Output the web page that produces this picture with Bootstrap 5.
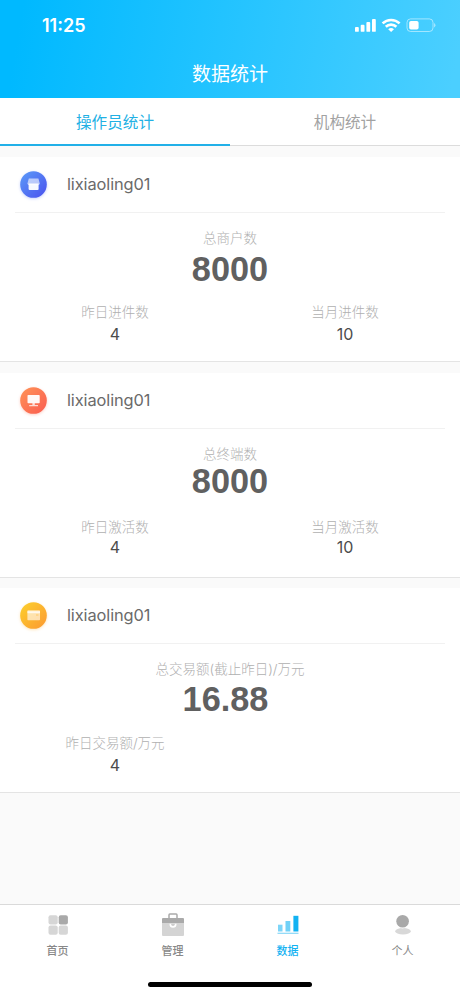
<!DOCTYPE html>
<html lang="zh-CN">
<head>
<meta charset="utf-8">
<meta name="viewport" content="width=device-width, initial-scale=1">
<title>数据统计</title>
<link href="https://cdn.jsdelivr.net/npm/bootstrap@5.3.0/dist/css/bootstrap.min.css" rel="stylesheet">
<style>
body{font-family:Inter,"Noto Sans CJK SC",sans-serif;background:#fafafa;color:#555;height:996px;overflow:hidden}
.app-head{height:98px;background:linear-gradient(100deg,#00b9ff 5%,#4bcfff 98%)}
.status{height:50px;padding:2px 24px 0 42px}
.clock{font-size:18px;font-weight:600;line-height:1}
.page-title{font-size:19px;line-height:50px;font-weight:400}
.tabs{height:48px}
.tabs .nav-link{border-radius:0;padding:0;font-size:15.6px;line-height:50px;height:48px;color:#a2a2a2;border-bottom:1px solid #dcdcdc}
.tabs .nav-link.active{color:#22b0e4;background:none;border-bottom:2px solid #22b0e8}
.stats{padding-top:11px;gap:10.5px}
.stat{height:205px;border-bottom:1px solid #e4e4e4}
.stat-head{height:56px;margin:0 15px;padding-left:5px;gap:20px;border-bottom:1px solid #f1f1f1}
.stat-head svg{width:27px;height:27px;overflow:visible}
.tone-blue{filter:drop-shadow(0 1px 1.5px #5b78f855)}
.tone-red{filter:drop-shadow(0 1px 1.5px #fa705055)}
.tone-gold{filter:drop-shadow(0 1px 1.5px #fcb03255)}
.user{font-size:16.4px;line-height:1;letter-spacing:-.1px;color:#6a6a6a}
.caption{font-size:13.5px;line-height:20px;color:#b0b0b0;font-weight:300}
.total{font:bold 34.3px/36px "Liberation Sans",Arial,sans-serif;color:#606060;margin-top:3px}
.value{font-size:16px;line-height:20px;color:#4c4c4c}
.main-block{padding-top:15px}
.sub-block{margin-top:15px}
.sub-block .value{margin-top:2px}
.tight .total{margin-top:-1px}
.tight .sub-block{margin-top:18.5px}
.tight .sub-block .value{margin-top:0}
.money .total{margin-top:2px;padding-right:9px}
.money .sub-block{margin-top:16px}
.tabbar{height:92px;border-top:1px solid #dadada}
.tabbar a{color:#888;font-size:11px;line-height:16px;font-weight:500;padding-top:8px}
.tabbar a.current{color:#12b2f2}
.tabbar svg{width:24px;height:24px;margin-bottom:6px}
.home-line{width:164px;height:5.5px;margin-bottom:9px}
</style>
</head>
<body class="d-flex flex-column">
<header class="app-head text-white flex-shrink-0">
  <div class="status d-flex justify-content-between align-items-center">
    <span class="clock">11:25</span>
    <svg width="81" height="16" viewBox="0 0 81 16" fill="#fff" overflow="visible">
      <rect x="0" y="9" width="3.8" height="4.8" rx=".9"/><rect x="5.7" y="6.8" width="3.8" height="7" rx=".9"/><rect x="11.4" y="4" width="3.8" height="9.8" rx=".9"/><rect x="17" y="1" width="3.8" height="12.8" rx=".9"/>
      <g transform="translate(-1 -1)"><g fill="none" stroke="#fff" stroke-width="2.6"><path d="M28.6 6.4a12.2 12.2 0 0 1 17 0"/><path d="M31.8 9.8a7.6 7.6 0 0 1 10.6 0"/></g><path d="M34.2 12.2a4.3 4.3 0 0 1 5.8 0l-2.9 2.8z"/></g>
      <g transform="translate(-.8 -1)"><rect x="52.8" y="1.9" width="26" height="12.6" rx="3.6" fill="none" stroke="#fff" stroke-opacity=".5"/><rect x="55" y="4" width="9.4" height="8.6" rx="1.8"/><path d="M80 6v4.4q1.2-.8 1.2-2.2T80 6z" opacity=".6"/></g>
    </svg>
  </div>
  <h1 class="page-title text-center m-0">数据统计</h1>
</header>
<nav class="tabs nav nav-pills nav-justified bg-white flex-shrink-0">
  <a class="nav-link active" href="#">操作员统计</a>
  <a class="nav-link" href="#">机构统计</a>
</nav>
<main class="stats d-flex flex-column flex-grow-1">
  <section class="stat bg-white">
    <div class="stat-head d-flex align-items-center">
      <svg class="tone-blue" viewBox="0 0 27 27"><defs><linearGradient id="blue" x2="1" y2="1"><stop stop-color="#5b9cf8"/><stop offset="1" stop-color="#4a50ee"/></linearGradient></defs><circle cx="13.5" cy="13.5" r="13.3" fill="url(#blue)"/><path d="M8.8 7.6h9.6l1.3 4.6q0 2-1.8 2H9.3q-1.8 0-1.8-2z" fill="#fff" opacity=".6"/><path d="M8.6 12.4h10V18q0 1-1 1h-8q-1 0-1-1z" fill="#fff" opacity=".95"/></svg>
      <span class="user">lixiaoling01</span>
    </div>
    <div class="main-block text-center"><div class="caption">总商户数</div><div class="total">8000</div></div>
    <div class="sub-block row g-0 text-center">
      <div class="col-6"><div class="caption">昨日进件数</div><div class="value">4</div></div>
      <div class="col-6"><div class="caption">当月进件数</div><div class="value">10</div></div>
    </div>
  </section>
  <section class="stat tight bg-white">
    <div class="stat-head d-flex align-items-center">
      <svg class="tone-red" viewBox="0 0 27 27"><defs><linearGradient id="red" x2="1" y2="1"><stop stop-color="#ff9457"/><stop offset="1" stop-color="#fa5b50"/></linearGradient></defs><circle cx="13.5" cy="13.5" r="13.3" fill="url(#red)"/><rect x="7.5" y="8" width="12.2" height="8.2" rx=".8" fill="#fff" opacity=".95"/><path d="M12.4 16h2.4v2h3.2v1.2H9.2V18h3.2z" fill="#fff" opacity=".75"/></svg>
      <span class="user">lixiaoling01</span>
    </div>
    <div class="main-block text-center"><div class="caption">总终端数</div><div class="total">8000</div></div>
    <div class="sub-block row g-0 text-center">
      <div class="col-6"><div class="caption">昨日激活数</div><div class="value">4</div></div>
      <div class="col-6"><div class="caption">当月激活数</div><div class="value">10</div></div>
    </div>
  </section>
  <section class="stat money bg-white">
    <div class="stat-head d-flex align-items-center">
      <svg class="tone-gold" viewBox="0 0 27 27"><defs><linearGradient id="gold" x2="1" y2="1"><stop stop-color="#fcd12c"/><stop offset="1" stop-color="#fc9832"/></linearGradient></defs><circle cx="13.5" cy="13.5" r="13.3" fill="url(#gold)"/><rect x="7.4" y="8.3" width="12.6" height="10" rx=".7" fill="#fff" opacity=".62"/><path d="M7.4 9.2H20v2H7.4z" fill="#fff" opacity=".75"/><path d="M16 13h2.5" stroke="#ffb834" opacity=".6"/></svg>
      <span class="user">lixiaoling01</span>
    </div>
    <div class="main-block text-center"><div class="caption">总交易额(截止昨日)/万元</div><div class="total">16.88</div></div>
    <div class="sub-block row g-0 text-center">
      <div class="col-6"><div class="caption">昨日交易额/万元</div><div class="value">4</div></div>
    </div>
  </section>
</main>
<footer class="tabbar bg-white d-flex flex-column justify-content-between flex-shrink-0">
  <nav class="row g-0 text-center">
    <a class="col d-flex flex-column align-items-center text-decoration-none" href="#">
      <svg viewBox="0 0 24 24" fill="#d6d6d6"><rect x="2.5" y="2.2" width="9.2" height="9.2" rx="2"/><rect x="12.7" y="2.2" width="9.2" height="9.2" rx="2" fill="#a9a9a9"/><rect x="2.5" y="12.5" width="9.2" height="9.2" rx="2"/><rect x="12.7" y="12.5" width="9.2" height="9.2" rx="2"/></svg>首页</a>
    <a class="col d-flex flex-column align-items-center text-decoration-none" href="#">
      <svg viewBox="0 0 24 24"><path d="M8 5V2q0-.9.9-.9h6.2q.9 0 .9.9v3" fill="none" stroke="#aaa" stroke-width="1.5"/><path d="M1 6q0-1 1-1h20q1 0 1 1v4.5H1z" fill="#aaa"/><path d="M1 11h22v11q0 1-1 1H2q-1 0-1-1z" fill="#d4d4d4"/><path d="M8.5 10.7v.5a3.5 3.5 0 0 0 7 0v-.5z" fill="#fff"/><path d="M10.2 10.7v.5a1.8 1.8 0 0 0 3.6 0v-.5z" fill="#ccc"/></svg>管理</a>
    <a class="col current d-flex flex-column align-items-center text-decoration-none" href="#">
      <svg viewBox="0 0 24 24" fill="#12b2f2"><rect x="2" y="11.7" width="4.5" height="6.8" opacity=".55"/><rect x="9.5" y="8" width="4.8" height="10.5" opacity=".6"/><rect x="17.4" y="2.8" width="5" height="15.7"/><path d="M1.5 19.7h21v1.2h-21z" opacity=".5"/></svg>数据</a>
    <a class="col d-flex flex-column align-items-center text-decoration-none fw-normal" href="#">
      <svg viewBox="0 0 24 24"><ellipse cx="12" cy="18.3" rx="7.8" ry="3.2" fill="#d8d8d8"/><circle cx="11.6" cy="8.3" r="7.1" fill="#fff"/><circle cx="11.6" cy="8.3" r="6.3" fill="#a9a9a9"/></svg>个人</a>
  </nav>
  <div class="home-line bg-black rounded-pill mx-auto"></div>
</footer>
<script src="https://cdn.jsdelivr.net/npm/bootstrap@5.3.0/dist/js/bootstrap.bundle.min.js"></script>
</body>
</html>
